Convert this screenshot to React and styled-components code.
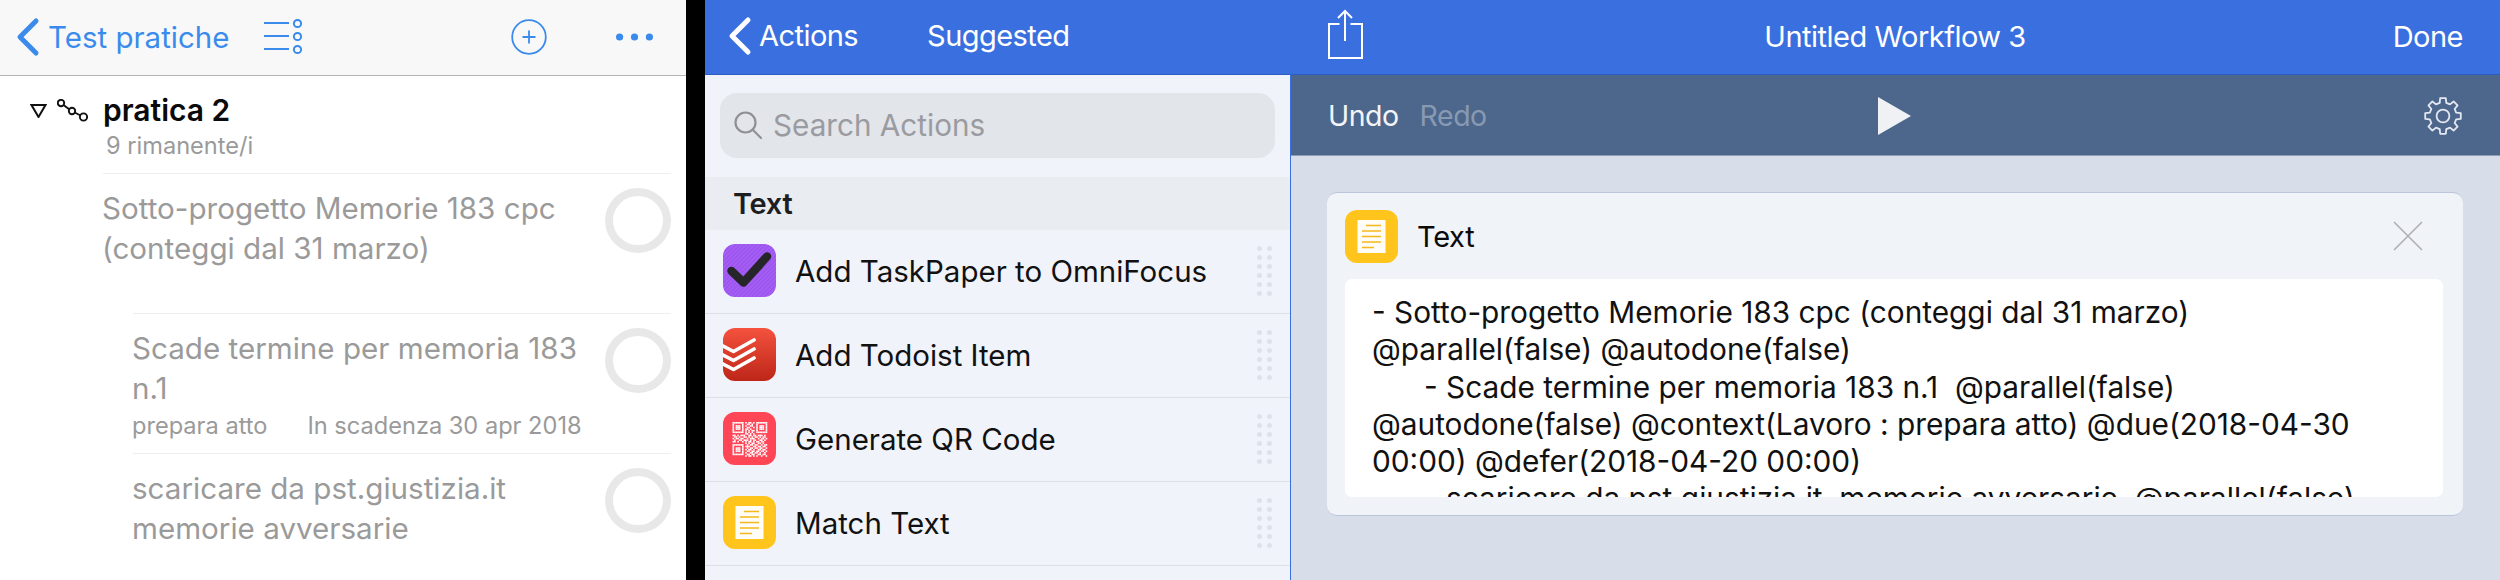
import React from "react";
import styled, { createGlobalStyle } from "styled-components";

const Global = createGlobalStyle`
  html, body { margin: 0; padding: 0; background: #000; }
  body { font-family: Inter, "Noto Sans", "Liberation Sans", sans-serif; }
  * { box-sizing: border-box; }
`;

const Page = styled.div`
  display: flex;
  width: 2500px;
  height: 580px;
  overflow: hidden;
  background: #000;
`;

/* ---------- left: task list ---------- */
const ListPane = styled.section`
  width: 686px;
  margin-right: 19px;
  background: #fff;
  flex: none;
`;
const ListBar = styled.header`
  height: 76px;
  display: flex;
  align-items: center;
  padding: 0 33px 2px 16px;
  background: #f8f8f8;
  border-bottom: 1px solid #b4b4b4;
  color: #3b8bec;
`;
const BackLabel = styled.span`
  font-size: ${p => p.$size || "29px"};
  line-height: 40px;
  letter-spacing: ${p => p.$track || "-0.55px"};
  margin-left: ${p => p.$gap || "10px"};
`;
const ViewIcon = styled.svg`
  margin-left: 34px;
  flex: none;
`;
const BarSpacer = styled.div`
  flex: 1;
`;
const DotsIcon = styled.svg`
  margin-left: 69px;
  flex: none;
`;
const ProjectHead = styled.div`
  height: 97px;
  display: flex;
  align-items: flex-start;
  padding: 15px 0 0 30px;
`;
const Disclosure = styled.svg`
  flex: none;
  margin-top: 13px;
`;
const ChainIcon = styled.svg`
  flex: none;
  margin: 8px 0 0 10px;
`;
const ProjectText = styled.div`
  margin-left: 15px;
`;
const ProjectTitle = styled.div`
  font-size: 30px;
  line-height: 38px;
  font-weight: 600;
  color: #0a0a0a;
`;
const Remaining = styled.div`
  font-size: 23.6px;
  line-height: 28px;
  margin: 3px 0 0 3px;
  color: #9a9a9a;
`;
const TaskRow = styled.div`
  height: 140px;
  margin: 0 15px 0 ${p => p.$indent}px;
  padding-top: 14px;
  border-top: 1px solid #eeeeee;
  display: flex;
  justify-content: space-between;
  align-items: flex-start;
`;
const TaskText = styled.div`
  width: 470px;
  margin-left: -1px;
`;
const TaskLine = styled.div`
  font-size: 29.6px;
  line-height: 40px;
  color: #9a9a9a;
  white-space: nowrap;
`;
const TaskMeta = styled.div`
  display: flex;
  gap: 40px;
  margin-top: -2px;
  font-size: 23.6px;
  line-height: 40px;
  color: #9a9a9a;
`;
const Ring = styled.div`
  width: 66px;
  height: 65px;
  flex: none;
  border: 8px solid #e8e8e8;
  border-radius: 50%;
`;

/* ---------- middle: action library ---------- */
const ActionsPane = styled.section`
  width: 586px;
  flex: none;
  background: #f0f3f9;
  border-right: 1px solid #3a6fdf;
`;
const BlueBar = styled.header`
  height: 75px;
  display: flex;
  align-items: center;
  background: #3a6fdf;
  border-bottom: 1px solid #2d5cc0;
  color: #fff;
  padding: ${p => p.$padding};
`;
const SearchField = styled.div`
  height: 65px;
  margin: 18px 15px 19px;
  padding: 0 0 2px 13px;
  border-radius: 17px;
  background: #e2e5ea;
  display: flex;
  align-items: center;
  gap: 10px;
`;
const SearchHint = styled.span`
  font-size: 29.7px;
  color: #9a9ba0;
`;
const SectionHead = styled.div`
  height: 53px;
  padding-left: 28px;
  display: flex;
  align-items: center;
  background: #e9ecf0;
  font-size: 29px;
  font-weight: 600;
  letter-spacing: -0.3px;
  color: #1e1e1e;
`;
const ActionRow = styled.div`
  height: 84px;
  padding: 0 18px 2px 18px;
  border-bottom: 1px solid #dcdfe4;
  display: flex;
  align-items: center;
`;
const ActionName = styled.span`
  flex: 1;
  margin-left: 19px;
  font-size: 29.5px;
  color: #111;
`;
const Grip = styled.div`
  display: grid;
  grid-template-columns: repeat(2, 5px);
  grid-auto-rows: 5px;
  gap: 4px 5px;
`;
const GripDot = styled.i`
  display: block;
  border-radius: 50%;
  background: #dce1ec;
`;
const AppIcon = styled.svg`
  flex: none;
  display: block;
`;

/* ---------- right: workflow ---------- */
const WorkflowPane = styled.section`
  flex: 1;
  background: #d7dee9;
`;
const TitleBar = styled(BlueBar)`
  justify-content: space-between;
`;
const BarSide = styled.div`
  width: 120px;
  display: flex;
  justify-content: ${p => p.$end ? "flex-end" : "flex-start"};
`;
const BarTitle = styled.span`
  font-size: 29px;
  letter-spacing: -0.5px;
`;
const Tools = styled.div`
  height: 81px;
  padding: 1px 39px 0 37px;
  display: grid;
  grid-template-columns: 1fr auto 1fr;
  align-items: center;
  background: #4d678c;
  border-bottom: 1px solid #8b9fbc;
`;
const History = styled.div`
  display: flex;
  gap: 21px;
`;
const HistoryLabel = styled.span`
  font-size: 28.5px;
  letter-spacing: -0.5px;
  color: ${p => p.$off ? "#8899b2" : "#f2f4f8"};
`;
const ToolEnd = styled.div`
  display: flex;
  justify-content: flex-end;
  margin-right: -2px;
`;
const Card = styled.article`
  height: 324px;
  margin: 36px 37px 0 36px;
  border-radius: 10px;
  background: #f0f3f8;
  border-top: 1px solid #b9c6da;
  border-bottom: 1px solid #b9c6da;
`;
const CardHead = styled.div`
  height: 86px;
  padding: 0 40px 0 18px;
  display: flex;
  align-items: center;
`;
const CardTitle = styled.span`
  flex: 1;
  margin-left: 19px;
  font-size: 29px;
  letter-spacing: -0.3px;
  color: #0a0a0a;
`;
const TextBox = styled.div`
  height: 218px;
  margin: 0 20px 0 18px;
  padding: 15px 0 0 27px;
  border-radius: 7px;
  background: #fff;
  overflow: hidden;
`;
const CodeLine = styled.div`
  font-size: 29.8px;
  line-height: 37.3px;
  margin-left: ${p => p.$indent || 0}px;
  white-space: pre;
  color: #111;
`;
const ShareGlyph = styled.svg`
  display: block;
  margin-top: -2px;
`;

/* ---------- drawings ---------- */
const Chevron = () => (
  <svg width="24" height="40" viewBox="0 0 24 40" fill="none" stroke="currentColor" strokeWidth="5" strokeLinecap="round" strokeLinejoin="round">
    <path d="M20 4 L4 20 L20 36" />
  </svg>
);
const NoteIcon = () => (
  <AppIcon width="53" height="53" viewBox="0 0 53 53">
    <rect width="53" height="53" rx="12" fill="#ffc51c" />
    <rect x="12.5" y="10" width="28" height="33" fill="#fffdf6" />
    <g stroke="#f5b81a" strokeWidth="1.5">
      <path d="M21 15.5H36M17 21H36M17 26.5H36M17 32H36M17 37.5H29" />
    </g>
  </AppIcon>
);
const OmniIcon = () => (
  <AppIcon width="53" height="53" viewBox="0 0 53 53">
    <defs>
      <pattern id="hatch" width="3" height="3" patternUnits="userSpaceOnUse" patternTransform="rotate(45)">
        <rect width="3" height="3" fill="#a45ef4" />
        <rect width="1" height="3" fill="#9a50ec" />
      </pattern>
    </defs>
    <rect width="53" height="53" rx="12" fill="url(#hatch)" />
    <path d="M8.5 27 L20.5 38.5 L44 12.5" fill="none" stroke="#26252a" strokeWidth="8.5" strokeLinecap="round" strokeLinejoin="round" />
  </AppIcon>
);
const TodoistIcon = () => (
  <AppIcon width="53" height="53" viewBox="0 0 53 53">
    <defs>
      <linearGradient id="todo" x1="0" y1="0" x2="0" y2="1">
        <stop offset="0" stopColor="#f4523e" />
        <stop offset="1" stopColor="#bd2618" />
      </linearGradient>
      <clipPath id="todoClip"><rect width="53" height="53" rx="12" /></clipPath>
    </defs>
    <rect width="53" height="53" rx="12" fill="url(#todo)" />
    <g clipPath="url(#todoClip)" fill="none" stroke="#fff" strokeWidth="3.6" strokeLinecap="round" strokeLinejoin="round">
      <path d="M-3 16.5 L10.5 23.5 L31 12" />
      <path d="M-3 25.5 L10.5 32.5 L31 21" />
      <path d="M-3 34.5 L10.5 41.5 L31 30" />
    </g>
  </AppIcon>
);
const QR_ROWS = [
  "1111111010110101111111",
  "1000001001101001000001",
  "1011101010011001011101",
  "1011101001100101011101",
  "1011101011010001011101",
  "1000001010101101000001",
  "1111111010101001111111",
  "0000000011010100000000",
  "1101011100110110111010",
  "0110100110101011010110",
  "1011011001011100101101",
  "0100110111010110011010",
  "1101001010110101101100",
  "0000000010101100110100",
  "1111111001011011001011",
  "1000001011100110110110",
  "1011101001011011011001",
  "1011101010110100110110",
  "1011101001101101101101",
  "1000001010011011010010",
  "1111111001101100110110",
  "0000000010110101001001",
];
const QrIcon = () => (
  <AppIcon width="53" height="53" viewBox="0 0 53 53">
    <rect width="53" height="53" rx="12" fill="#ff4656" />
    <g fill="#fff">
      {QR_ROWS.flatMap((row, y) =>
        [...row].map((c, x) =>
          c === "1" ? <rect key={`${x}-${y}`} x={9.5 + x * 1.58} y={10 + y * 1.58} width="1.6" height="1.6" /> : null
        )
      )}
    </g>
  </AppIcon>
);
const gearPath = (() => {
  const cx = 20, cy = 20, outer = 18, inner = 13.6, teeth = 8;
  const pts = [];
  for (let i = 0; i < teeth; i++) {
    const a = (i / teeth) * Math.PI * 2 - Math.PI / 2;
    const w = Math.PI * 2 / teeth;
    [[-0.31, inner], [-0.2, outer], [0.2, outer], [0.31, inner]].forEach(([f, r]) => {
      const t = a + f * w;
      pts.push(`${(cx + r * Math.cos(t)).toFixed(2)} ${(cy + r * Math.sin(t)).toFixed(2)}`);
    });
  }
  return "M" + pts.join("L") + "Z";
})();
const Gear = () => (
  <svg width="40" height="40" viewBox="0 0 40 40" fill="none" stroke="#e4e9f1" strokeWidth="1.8" strokeLinejoin="round">
    <path d={gearPath} />
    <circle cx="20" cy="20" r="6.4" />
  </svg>
);
const ShareIcon = () => (
  <ShareGlyph width="36" height="52" viewBox="0 0 36 52" fill="none" stroke="#fff" strokeWidth="2">
    <path d="M12.5 15H2V49H35V15H23.5" />
    <path d="M18 2V32M11 9L18 2L25 9" />
  </ShareGlyph>
);
const SearchGlyph = () => (
  <svg width="30" height="30" viewBox="0 0 30 30" fill="none" stroke="#8f9095" strokeWidth="2.2" strokeLinecap="round">
    <circle cx="12.5" cy="12.5" r="10" />
    <path d="M20 20L28 28" />
  </svg>
);

const actions = [
  ["Add TaskPaper to OmniFocus", OmniIcon],
  ["Add Todoist Item", TodoistIcon],
  ["Generate QR Code", QrIcon],
  ["Match Text", NoteIcon],
];

const GripHandle = () => (
  <Grip>{Array.from({ length: 12 }, (_, i) => <GripDot key={i} />)}</Grip>
);

export default function App() {
  return (
    <Page>
      <Global />
      <ListPane>
        <ListBar>
          <Chevron />
          <BackLabel $gap="8px" $size="29.5px" $track="0">Test pratiche</BackLabel>
          <ViewIcon width="40" height="36" viewBox="0 0 40 36" fill="none" stroke="currentColor" strokeWidth="2">
            <path d="M1 4H26M1 17H26M1 30H26" />
            <circle cx="34.5" cy="4.5" r="3.6" />
            <circle cx="34.5" cy="17.5" r="3.6" />
            <circle cx="34.5" cy="30.5" r="3.6" />
          </ViewIcon>
          <BarSpacer />
          <svg width="36" height="36" viewBox="0 0 36 36" fill="none" stroke="currentColor" strokeWidth="1.8">
            <circle cx="18" cy="18" r="16.8" />
            <path d="M18 11.5V24.5M11.5 18H24.5" />
          </svg>
          <DotsIcon width="37" height="8" viewBox="0 0 37 8" fill="currentColor">
            <circle cx="3.6" cy="4" r="3.6" />
            <circle cx="18.5" cy="4" r="3.6" />
            <circle cx="33.4" cy="4" r="3.6" />
          </DotsIcon>
        </ListBar>
        <ProjectHead>
          <Disclosure width="17" height="14" viewBox="0 0 17 14" fill="none" stroke="#111" strokeWidth="2">
            <path d="M1.5 1H15.5L8.5 13Z" />
          </Disclosure>
          <ChainIcon width="31" height="24" viewBox="0 0 31 24" fill="none" stroke="#111" strokeWidth="1.9">
            <circle cx="4" cy="4" r="3.2" />
            <circle cx="15" cy="12" r="3.2" />
            <circle cx="26.5" cy="18" r="3.6" />
            <path d="M6.5 6L12.5 10.5M17.7 13.5L23.5 16.5" />
          </ChainIcon>
          <ProjectText>
            <ProjectTitle>pratica 2</ProjectTitle>
            <Remaining>9 rimanente/i</Remaining>
          </ProjectText>
        </ProjectHead>
        <TaskRow $indent={103}>
          <TaskText>
            <TaskLine>Sotto-progetto Memorie 183 cpc</TaskLine>
            <TaskLine>(conteggi dal 31 marzo)</TaskLine>
          </TaskText>
          <Ring />
        </TaskRow>
        <TaskRow $indent={133}>
          <TaskText>
            <TaskLine>Scade termine per memoria 183</TaskLine>
            <TaskLine>n.1</TaskLine>
            <TaskMeta>
              <span>prepara atto</span>
              <span>In scadenza 30 apr 2018</span>
            </TaskMeta>
          </TaskText>
          <Ring />
        </TaskRow>
        <TaskRow $indent={133}>
          <TaskText>
            <TaskLine>scaricare da pst.giustizia.it</TaskLine>
            <TaskLine>memorie avversarie</TaskLine>
          </TaskText>
          <Ring />
        </TaskRow>
      </ListPane>

      <ActionsPane>
        <BlueBar $padding="0 0 2px 23px">
          <Chevron />
          <BackLabel $gap="7px">Actions</BackLabel>
          <BackLabel $gap="69px">Suggested</BackLabel>
        </BlueBar>
        <SearchField>
          <SearchGlyph />
          <SearchHint>Search Actions</SearchHint>
        </SearchField>
        <SectionHead>Text</SectionHead>
        {actions.map(([name, Icon]) => (
          <ActionRow key={name}>
            <Icon />
            <ActionName>{name}</ActionName>
            <GripHandle />
          </ActionRow>
        ))}
      </ActionsPane>

      <WorkflowPane>
        <TitleBar $padding="0 37px 2px 36px">
          <BarSide><ShareIcon /></BarSide>
          <BarTitle>Untitled Workflow 3</BarTitle>
          <BarSide $end><BarTitle>Done</BarTitle></BarSide>
        </TitleBar>
        <Tools>
          <History>
            <HistoryLabel>Undo</HistoryLabel>
            <HistoryLabel $off>Redo</HistoryLabel>
          </History>
          <svg width="33" height="38" viewBox="0 0 33 38" fill="#eff1f5"><path d="M0 0L33 19L0 38Z" /></svg>
          <ToolEnd><Gear /></ToolEnd>
        </Tools>
        <Card>
          <CardHead>
            <NoteIcon />
            <CardTitle>Text</CardTitle>
            <svg width="30" height="30" viewBox="0 0 30 30" fill="none" stroke="#adadb2" strokeWidth="1.5">
              <path d="M1 1L29 29M29 1L1 29" />
            </svg>
          </CardHead>
          <TextBox>
            <CodeLine>- Sotto-progetto Memorie 183 cpc (conteggi dal 31 marzo)</CodeLine>
            <CodeLine>@parallel(false) @autodone(false)</CodeLine>
            <CodeLine $indent={52}>- Scade termine per memoria 183 n.1  @parallel(false)</CodeLine>
            <CodeLine>@autodone(false) @context(Lavoro : prepara atto) @due(2018-04-30</CodeLine>
            <CodeLine>00:00) @defer(2018-04-20 00:00)</CodeLine>
            <CodeLine $indent={74}>scaricare da pst.giustizia.it  memorie avversarie  @parallel(false)</CodeLine>
          </TextBox>
        </Card>
      </WorkflowPane>
    </Page>
  );
}
